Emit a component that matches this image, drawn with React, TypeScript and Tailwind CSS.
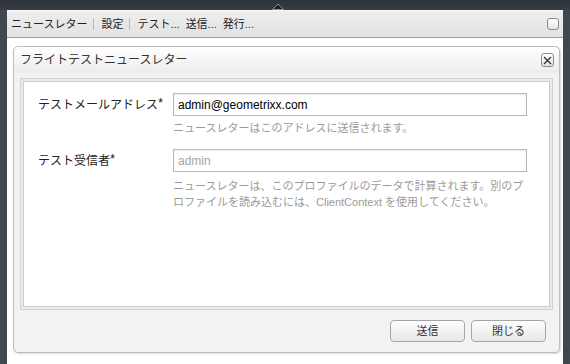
import React from "react";

const FONT = "font-['Liberation_Sans','Noto_Sans_CJK_JP',sans-serif]";

function Sep() {
  return <div className="w-px h-[12px] bg-[#b8b8b8] ml-[6px] mr-[7px]" />;
}

export default function App() {
  return (
    <div className={`w-[570px] h-[364px] flex flex-col bg-[#3d484f] overflow-hidden ${FONT}`}>
      {/* top dark bar */}
      <div className="h-[10px] bg-gradient-to-b from-[#2c3237] to-[#363d43] flex items-end pl-[272px]">
        <svg width="12" height="7" viewBox="0 0 12 7">
          <polygon points="0.5,6.5 6,1 11.5,6.5" fill="#1e2226" stroke="#8a9095" strokeWidth="1" />
        </svg>
      </div>
      <div className="flex-1 flex px-[7px]">
        <div className="flex-1 flex flex-col bg-white">
          {/* toolbar */}
          <div className="h-[28px] shrink-0 flex items-center pl-[4px] pr-[4px] border-t border-t-[#f6f6f6] border-b border-b-[#9c9c9c] bg-gradient-to-b from-[#eeeeee] to-[#e2e2e2] text-[11px] text-[#222]">
            <span>ニュースレター</span>
            <Sep />
            <span>設定</span>
            <Sep />
            <span>テスト...</span>
            <span className="ml-[6px]">送信...</span>
            <span className="ml-[6px]">発行...</span>
            <div className="ml-auto w-[12px] h-[12px] rounded-[3px] border border-[#8a8a8a] bg-gradient-to-b from-white to-[#e4e4e4]" />
          </div>
          {/* content area */}
          <div className="flex-1 flex flex-col pl-[6px] pr-[3px] pt-[8px] pb-[11px]">
            <div className="flex-1 flex flex-col border border-[#bdbdbd] rounded-[5px] bg-[#f2f2f2] shadow-[1px_1px_2px_rgba(0,0,0,0.15)]">
              {/* title */}
              <div className="h-[26px] shrink-0 flex items-center pl-[6px] pr-[5px] rounded-t-[5px] bg-gradient-to-b from-white to-[#ececec]">
                <span className="text-[12px] text-[#333]">フライトテストニュースレター</span>
                <div className="ml-auto w-[13px] h-[14px] rounded-[3px] border border-[#8c8c8c] bg-gradient-to-b from-white to-[#e0e0e0] flex items-center justify-center">
                  <svg width="9" height="9" viewBox="0 0 9 9">
                    <path d="M1 1 L8 8 M8 1 L1 8" stroke="#333" strokeWidth="1.3" />
                  </svg>
                </div>
              </div>
              {/* body */}
              <div className="flex-1 flex flex-col px-[6px] pt-[5px]">
                <div className="h-[232px] border border-[#d2d2d2] bg-[#ebebeb] p-[2px] flex">
                  <div className="flex-1 border border-[#cbcbcb] bg-white pl-[14px] pt-[11px]">
                    <div className="grid grid-cols-[135px_354px]">
                      <div className="h-[23px] flex items-center text-[12px] text-[#222]">
                        テストメールアドレス<span className="text-[13px] relative top-[-2px]">*</span>
                      </div>
                      <div className="h-[23px] border border-[#b9b9b9] bg-white shadow-[inset_0_1px_2px_rgba(0,0,0,0.08)] flex items-center pl-[4px] text-[12px] text-black">
                        admin@geometrixx.com
                      </div>
                      <div />
                      <div className="mt-[4px] text-[11px] leading-[16px] text-[#9a9a9a]">
                        ニュースレターはこのアドレスに送信されます。
                      </div>
                      <div className="mt-[13px] h-[23px] flex items-center text-[12px] text-[#222]">
                        テスト受信者<span className="text-[13px] relative top-[-2px]">*</span>
                      </div>
                      <div className="mt-[13px] h-[23px] border border-[#b9b9b9] bg-white shadow-[inset_0_1px_2px_rgba(0,0,0,0.08)] flex items-center pl-[4px] text-[12px] text-[#a5a5a5]">
                        admin
                      </div>
                      <div />
                      <div className="mt-[6px] text-[11px] leading-[16px] text-[#9a9a9a]">
                        <div>ニュースレターは、このプロファイルのデータで計算されます。別のプ</div>
                        <div>ロファイルを読み込むには、ClientContext を使用してください。</div>
                      </div>
                    </div>
                  </div>
                </div>
                {/* footer */}
                <div className="h-[42px] shrink-0 flex items-center justify-end gap-[6px] pr-[7px]">
                  <button className="w-[75px] h-[22px] rounded-[4px] border border-[#a6a6a6] bg-gradient-to-b from-[#fdfdfd] to-[#e7e7e7] text-[11px] text-[#333] flex items-center justify-center">
                    送信
                  </button>
                  <button className="w-[75px] h-[22px] rounded-[4px] border border-[#a6a6a6] bg-gradient-to-b from-[#fdfdfd] to-[#e7e7e7] text-[11px] text-[#333] flex items-center justify-center">
                    閉じる
                  </button>
                </div>
              </div>
            </div>
          </div>
        </div>
      </div>
    </div>
  );
}
